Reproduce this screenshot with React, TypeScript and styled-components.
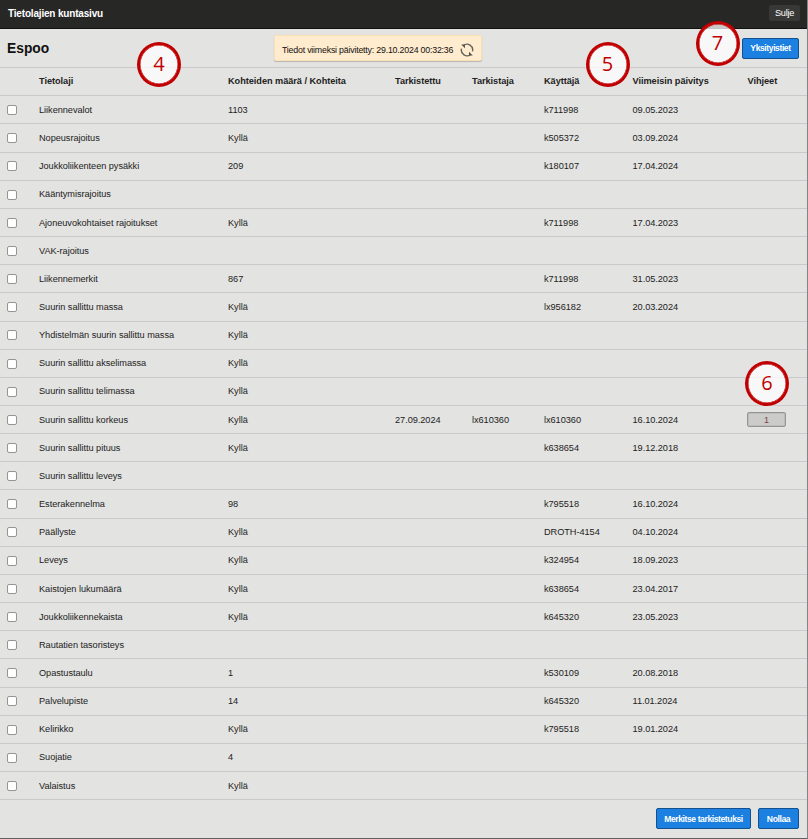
import React from "react";
import styled, { createGlobalStyle } from "styled-components";

const GlobalStyle = createGlobalStyle`
  * { box-sizing: border-box; }
  body { margin: 0; background: #e3e3e1; font-family: "Liberation Sans", Arial, sans-serif; color: #222; }
`;

const Dialog = styled.main`
  position: relative;
  width: 808px;
  height: 839px;
  overflow: hidden;
  display: flex;
  flex-direction: column;
  background: #e3e3e1;
  border-right: 1px solid #858585;
  border-bottom: 1px solid #626262;
`;

const TitleBar = styled.header`
  height: 29px;
  flex: none;
  display: flex;
  align-items: center;
  justify-content: space-between;
  padding: 0 7px 2px 8px;
  background: #272725;
  border-bottom: 1px solid #111;
`;

const Title = styled.h1`
  margin: 0;
  padding-top: 1px;
  font-size: 10px;
  line-height: 14px;
  letter-spacing: -0.18px;
  color: #fff;
`;

const CloseButton = styled.button`
  width: 31px;
  height: 16px;
  padding: 0;
  border: 0;
  border-radius: 2px;
  background: #383836;
  color: #fff;
  font: 9.2px/16px "Liberation Sans", Arial, sans-serif;
  letter-spacing: -0.3px;
`;

const SubHeader = styled.section`
  height: 38px;
  flex: none;
  display: grid;
  grid-template-columns: 274px 208px 1fr;
  align-items: center;
  padding-right: 8px;
`;

const Municipality = styled.h2`
  margin: 0;
  padding: 1px 0 0 7px;
  font-size: 13.8px;
  line-height: 18px;
  letter-spacing: 0;
  color: #111;
`;

const UpdateNotice = styled.div`
  height: 26px;
  display: flex;
  align-items: center;
  justify-content: space-between;
  padding: 4px 7px 0 7px;
  border: 1px solid #fbdfb5;
  border-radius: 2px;
  background: #ffebcd;
  box-shadow: 0 1px 1px rgba(0, 0, 0, 0.2);
  font-size: 8.8px;
  letter-spacing: -0.2px;
  white-space: nowrap;
  color: #111;
`;

const PrimaryButton = styled.button<{ $width: number }>`
  width: ${(p) => p.$width}px;
  height: 21px;
  padding: 0;
  justify-self: end;
  border: 1px solid #12508f;
  border-radius: 2px;
  background: #1b80e0;
  color: #fff;
  font: bold 8.6px/18px "Liberation Sans", Arial, sans-serif;
  letter-spacing: -0.42px;
  white-space: nowrap;
`;

const Row = styled.div`
  height: 28.16px;
  flex: none;
  display: grid;
  grid-template-columns: 39px 189px 167px 77px 72px 88.5px 115px 1fr;
  align-items: center;
  border-top: 1px solid #cacaca;
  font-size: 9.2px;
  letter-spacing: -0.04px;
  line-height: 12px;
  white-space: nowrap;
`;

const HeadRow = styled(Row)`
  height: 28.3px;
  padding-bottom: 1px;
  font-weight: bold;
`;

const Check = styled.input.attrs({ type: "checkbox" })`
  appearance: none;
  width: 10px;
  height: 10px;
  margin: 0.5px 0 0 7px;
  border: 1px solid #959595;
  border-radius: 2px;
  background: #fff;
`;

const HintButton = styled.button`
  width: 39px;
  height: 15px;
  margin-left: -0.5px;
  padding: 0;
  border: 1px solid #959595;
  border-radius: 2px;
  background: #cbcbca;
  box-shadow: inset 0 0 0 1px #bcbcbb;
  color: #7c4444;
  font: 9px/12px "Liberation Sans", Arial, sans-serif;
`;

const Actions = styled.footer`
  flex: 1;
  display: flex;
  justify-content: flex-end;
  align-items: flex-start;
  gap: 7px;
  padding: 8px 8px 0 0;
  border-top: 1px solid #cacaca;
`;

const Callout = styled.span<{ $x: number; $y: number }>`
  position: absolute;
  left: ${(p) => p.$x}px;
  top: ${(p) => p.$y}px;
  width: 44px;
  height: 45px;
  border: 3px solid #c00000;
  border-radius: 50%;
  background: rgba(255, 255, 255, 0.75);
  box-shadow: inset 0 0 0 0.5px #c00000;
  color: #c00000;
  font: 20px/38px "Open Sans", "Noto Sans", sans-serif;
  text-align: center;
`;

const SpinArrows = styled.svg`
  flex: none;
  width: 14px;
  height: 14px;
`;

type Entry = [string, string?, string?, string?, string?, string?, string?];

const entries: Entry[] = [
  ["Liikennevalot", "1103", "", "", "k711998", "09.05.2023"],
  ["Nopeusrajoitus", "Kyllä", "", "", "k505372", "03.09.2024"],
  ["Joukkoliikenteen pysäkki", "209", "", "", "k180107", "17.04.2024"],
  ["Kääntymisrajoitus"],
  ["Ajoneuvokohtaiset rajoitukset", "Kyllä", "", "", "k711998", "17.04.2023"],
  ["VAK-rajoitus"],
  ["Liikennemerkit", "867", "", "", "k711998", "31.05.2023"],
  ["Suurin sallittu massa", "Kyllä", "", "", "lx956182", "20.03.2024"],
  ["Yhdistelmän suurin sallittu massa", "Kyllä"],
  ["Suurin sallittu akselimassa", "Kyllä"],
  ["Suurin sallittu telimassa", "Kyllä"],
  ["Suurin sallittu korkeus", "Kyllä", "27.09.2024", "lx610360", "lx610360", "16.10.2024", "1"],
  ["Suurin sallittu pituus", "Kyllä", "", "", "k638654", "19.12.2018"],
  ["Suurin sallittu leveys"],
  ["Esterakennelma", "98", "", "", "k795518", "16.10.2024"],
  ["Päällyste", "Kyllä", "", "", "DROTH-4154", "04.10.2024"],
  ["Leveys", "Kyllä", "", "", "k324954", "18.09.2023"],
  ["Kaistojen lukumäärä", "Kyllä", "", "", "k638654", "23.04.2017"],
  ["Joukkoliikennekaista", "Kyllä", "", "", "k645320", "23.05.2023"],
  ["Rautatien tasoristeys"],
  ["Opastustaulu", "1", "", "", "k530109", "20.08.2018"],
  ["Palvelupiste", "14", "", "", "k645320", "11.01.2024"],
  ["Kelirikko", "Kyllä", "", "", "k795518", "19.01.2024"],
  ["Suojatie", "4"],
  ["Valaistus", "Kyllä"],
];

const headings = ["", "Tietolaji", "Kohteiden määrä / Kohteita", "Tarkistettu", "Tarkistaja", "Käyttäjä", "Viimeisin päivitys", "Vihjeet"];

const callouts = [
  { label: "4", x: 137, y: 42 },
  { label: "5", x: 585.5, y: 42 },
  { label: "7", x: 695.5, y: 21 },
  { label: "6", x: 745, y: 361 },
];

const RefreshIcon = () => (
  <SpinArrows viewBox="0 0 14 14" fill="none" stroke="#66635c" strokeWidth="1.4">
    <path d="M3.4 2.5A5.7 5.7 0 0 1 12.5 8.3M1.5 5.7A5.7 5.7 0 0 0 10.6 11.5" />
    <path d="M1.2 1.6h3.8v3.7zM12.8 12.4H9V8.7z" fill="#55534e" stroke="none" />
  </SpinArrows>
);

export default function App() {
  return (
    <>
      <GlobalStyle />
      <Dialog>
        <TitleBar>
          <Title>Tietolajien kuntasivu</Title>
          <CloseButton>Sulje</CloseButton>
        </TitleBar>
        <SubHeader>
          <Municipality>Espoo</Municipality>
          <UpdateNotice>
            <span>Tiedot viimeksi päivitetty: 29.10.2024 00:32:36</span>
            <RefreshIcon />
          </UpdateNotice>
          <PrimaryButton $width={57}>Yksityistiet</PrimaryButton>
        </SubHeader>
        <HeadRow>
          {headings.map((heading, i) => (
            <span key={i}>{heading}</span>
          ))}
        </HeadRow>
        {entries.map(([name, count, checked, checker, user, updated, hints]) => (
          <Row key={name}>
            <Check />
            <span>{name}</span>
            <span>{count}</span>
            <span>{checked}</span>
            <span>{checker}</span>
            <span>{user}</span>
            <span>{updated}</span>
            {hints && <HintButton>{hints}</HintButton>}
          </Row>
        ))}
        <Actions>
          <PrimaryButton $width={95}>Merkitse tarkistetuksi</PrimaryButton>
          <PrimaryButton $width={41}>Nollaa</PrimaryButton>
        </Actions>
        {callouts.map((c) => (
          <Callout key={c.label} $x={c.x} $y={c.y}>
            {c.label}
          </Callout>
        ))}
      </Dialog>
    </>
  );
}
